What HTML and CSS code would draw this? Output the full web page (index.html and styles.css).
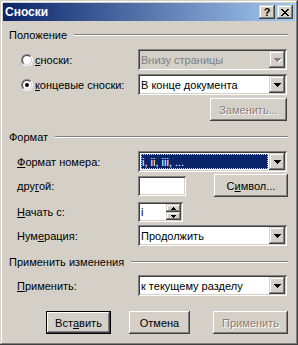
FILE: index.html
```html
<!DOCTYPE html>
<html>
<head>
  <meta charset="UTF-8">
  <title>Сноски</title>
  <link rel="stylesheet" href="styles.css">
</head>
<body>
  <div class="window">
    <div class="titlebar">
      <span class="title">Сноски</span>
      <div class="caps">
        <span class="capbtn help">?</span>
        <span class="capbtn">
          <svg width="8" height="7" shape-rendering="crispEdges"><path d="M0 0h2v1h1v1h2v-1h1v-1h2v1h-1v1h-1v1h-1v1h1v1h1v1h1v1h-2v-1h-1v-1h-2v1h-1v1h-2v-1h1v-1h1v-1h1v-1h-1v-1h-1v-1h-1z"/></svg>
        </span>
      </div>
    </div>

    <div class="content">
      <div class="group-head"><span>Положение</span><i class="etch"></i></div>

      <div class="row r-foot">
        <label class="lbl radio-lbl"><span class="radio"></span><u>с</u>носки:</label>
        <div class="combo disabled">
          <span class="combo-text">Внизу страницы</span>
          <span class="drop"><svg width="7" height="4" shape-rendering="crispEdges"><path d="M0 0h7v1h-1v1h-1v1h-1v1h-1v-1h-1v-1h-1v-1h-1z"/></svg></span>
        </div>
      </div>

      <div class="row r-end">
        <label class="lbl radio-lbl"><span class="radio checked"></span><u>к</u>онцевые сноски:</label>
        <div class="combo">
          <span class="combo-text">В конце документа</span>
          <span class="drop"><svg width="7" height="4" shape-rendering="crispEdges"><path d="M0 0h7v1h-1v1h-1v1h-1v1h-1v-1h-1v-1h-1v-1h-1z"/></svg></span>
        </div>
      </div>

      <div class="row r-convert">
        <span class="btn disabled w-convert">Заменить...</span>
      </div>

      <div class="group-head g-format"><span>Формат</span><i class="etch"></i></div>

      <div class="row r-numfmt">
        <label class="lbl"><u>Ф</u>ормат номера:</label>
        <div class="combo">
          <span class="combo-text"><span class="selected">i, ii, iii, ...</span></span>
          <span class="drop"><svg width="7" height="4" shape-rendering="crispEdges"><path d="M0 0h7v1h-1v1h-1v1h-1v1h-1v-1h-1v-1h-1v-1h-1z"/></svg></span>
        </div>
      </div>

      <div class="row r-custom">
        <label class="lbl">дру<u>г</u>ой:</label>
        <div class="custom-line">
          <span class="edit w-custom"></span>
          <span class="btn w-symbol">С<u>и</u>мвол...</span>
        </div>
      </div>

      <div class="row r-start">
        <label class="lbl"><u>Н</u>ачать с:</label>
        <div class="spin">
          <span class="spin-text">i</span>
          <span class="spin-btns">
            <span class="spin-btn"><svg width="5" height="3" shape-rendering="crispEdges"><path d="M2 0h1v1h1v1h1v1h-5v-1h1v-1h1z"/></svg></span>
            <span class="spin-btn"><svg width="5" height="3" shape-rendering="crispEdges"><path d="M0 0h5v1h-1v1h-1v1h-1v-1h-1v-1h-1z"/></svg></span>
          </span>
        </div>
      </div>

      <div class="row r-numbering">
        <label class="lbl">Нум<u>е</u>рация:</label>
        <div class="combo">
          <span class="combo-text">Продолжить</span>
          <span class="drop"><svg width="7" height="4" shape-rendering="crispEdges"><path d="M0 0h7v1h-1v1h-1v1h-1v1h-1v-1h-1v-1h-1v-1h-1z"/></svg></span>
        </div>
      </div>

      <div class="group-head g-apply"><span>Применить изменения</span><i class="etch"></i></div>

      <div class="row r-apply">
        <label class="lbl"><u>П</u>рименить:</label>
        <div class="combo">
          <span class="combo-text">к текущему разделу</span>
          <span class="drop"><svg width="7" height="4" shape-rendering="crispEdges"><path d="M0 0h7v1h-1v1h-1v1h-1v1h-1v-1h-1v-1h-1v-1h-1z"/></svg></span>
        </div>
      </div>

      <div class="actions">
        <span class="btn default w-insert">Вст<u>а</u>вить</span>
        <span class="btn w-cancel">Отмена</span>
        <span class="btn disabled w-applybtn">Применить</span>
      </div>
    </div>
  </div>
</body>
</html>
```

FILE: styles.css
```css
body { margin: 0; background: #d4d0c8; font-family: "Liberation Sans", Arial, sans-serif; font-size: 11px; color: #000; }
u { text-decoration: underline; text-underline-offset: 1px; }

.window {
  width: 298px; height: 345px; box-sizing: border-box; padding: 3px; background: #d4d0c8;
  box-shadow: inset -1px -1px #404040, inset 1px 1px #d4d0c8, inset -2px -2px #808080, inset 2px 2px #fff;
}

/* title bar */
.titlebar { height: 18px; display: flex; align-items: center; padding: 0 2px 0 2px; background: linear-gradient(to right, #0a246a, #a6caf0); }
.title { flex: 1; color: #fff; font-weight: bold; font-size: 12px; }
.caps { display: flex; gap: 2px; }
.capbtn {
  width: 16px; height: 14px; box-sizing: border-box; background: #d4d0c8;
  display: flex; align-items: center; justify-content: center;
  box-shadow: inset -1px -1px #404040, inset 1px 1px #d4d0c8, inset -2px -2px #808080, inset 2px 2px #fff;
}
.capbtn.help { font-weight: bold; font-size: 11px; line-height: 14px; }

/* content */
.content { padding: 0 7px 0 6px; }
.group-head { height: 14px; margin-top: 7px; display: flex; align-items: center; gap: 7px; }
.etch { flex: 1; height: 0; border-top: 1px solid #808080; border-bottom: 1px solid #fff; }
.g-format { margin-top: 9px; }
.g-apply { margin-top: 9px; }

.row { display: flex; align-items: center; }
.lbl { width: 121px; padding-left: 8px; white-space: nowrap; display: flex; align-items: center; }
.radio-lbl { width: 117px; padding-left: 12px; }

.r-foot { margin-top: 7px; }
.r-end { margin-top: 4px; }
.r-convert { margin-top: 3px; justify-content: flex-end; }
.r-numfmt { margin-top: 7px; }
.r-custom { margin-top: 2px; }
.r-start { margin-top: 5px; }
.r-numbering { margin-top: 3px; }
.r-apply { margin-top: 6px; }

/* radio */
.radio {
  width: 12px; height: 12px; box-sizing: border-box; border-radius: 50%; margin-right: 2px; position: relative;
  border: 1px solid; border-color: #808080 #fff #fff #808080;
}
.radio::before {
  content: ""; position: absolute; inset: 0; border-radius: 50%; background: #fff;
  border: 1px solid; border-color: #404040 #d4d0c8 #d4d0c8 #404040;
}
.radio.checked::after {
  content: ""; position: absolute; left: 3px; top: 3px; width: 4px; height: 4px; border-radius: 50%; background: #000;
}

/* sunken fields */
.combo, .edit, .spin {
  box-sizing: border-box; background: #fff; padding: 2px;
  box-shadow: inset 1px 1px #808080, inset -1px -1px #fff, inset 2px 2px #404040, inset -2px -2px #d4d0c8;
}
.combo { width: 149px; height: 21px; display: flex; align-items: stretch; }
.combo-text { flex: 1; display: flex; align-items: center; padding-left: 1px; white-space: nowrap; overflow: hidden; }
.combo.disabled { background: #d4d0c8; }
.combo.disabled .combo-text { color: #808080; }
.selected {
  flex: 1; align-self: stretch; margin: 1px 1px 1px 0; display: flex; align-items: center; padding-left: 1px;
  background: #0a246a; color: #fff; outline: 1px dotted #d8d890; outline-offset: -1px;
}

.drop, .spin-btn {
  background: #d4d0c8; display: flex; align-items: center; justify-content: center;
  box-shadow: inset -1px -1px #404040, inset 1px 1px #d4d0c8, inset -2px -2px #808080, inset 2px 2px #fff;
}
.drop { width: 16px; padding-top: 1px; box-sizing: border-box; }
.combo.disabled .drop svg { fill: #808080; filter: drop-shadow(1px 1px 0 #fff); }

.custom-line { display: flex; align-items: center; width: 150px; justify-content: space-between; }
.edit { height: 20px; }
.w-custom { width: 48px; }

.spin { width: 45px; height: 20px; display: flex; }
.spin-text { flex: 1; display: flex; align-items: center; padding-left: 1px; }
.spin-btns { display: flex; flex-direction: column; width: 15px; }
.spin-btn { flex: 1; }

/* buttons */
.btn {
  height: 23px; box-sizing: border-box; background: #d4d0c8; display: flex; align-items: center; justify-content: center;
  box-shadow: inset -1px -1px #404040, inset 1px 1px #fff, inset -2px -2px #808080, inset 2px 2px #d4d0c8;
}
.btn.disabled { color: #808080; text-shadow: 1px 1px 0 #fff; }
.btn.default {
  border: 1px solid #000;
  box-shadow: inset -1px -1px #404040, inset 1px 1px #fff, inset -2px -2px #808080, inset 2px 2px #d4d0c8;
}
.w-convert { width: 77px; margin-right: 1px; }
.w-symbol { width: 74px; }

.actions { display: flex; margin-top: 15px; padding-left: 37px; }
.w-insert { width: 65px; }
.w-cancel { width: 61px; margin-left: 18px; }
.w-applybtn { width: 75px; margin-left: 23px; }
```
